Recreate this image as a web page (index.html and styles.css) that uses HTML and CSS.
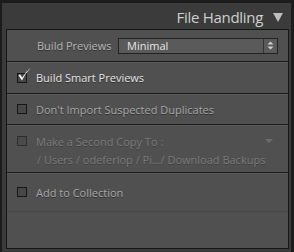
FILE: index.html
```html
<!DOCTYPE html>
<html>
<head>
<meta charset="utf-8">
<link rel="stylesheet" href="styles.css">
</head>
<body>
<div class="frame">
  <div class="header">
    <span class="title">File Handling</span>
    <span class="tri"></span>
  </div>
  <div class="panel">
    <div class="row row-previews">
      <span class="label">Build Previews</span>
      <div class="select">
        <span class="sel-text">Minimal</span>
        <span class="stepper">
          <svg width="7" height="9" viewBox="0 0 7 9"><path d="M3.5 0.5 L6.5 3.5 H0.5 Z M3.5 8.5 L6.5 5.5 H0.5 Z" fill="#cfcfcf"/></svg>
        </span>
      </div>
    </div>
    <div class="row row-check">
      <span class="box checked">
        <svg class="tick" width="15" height="16" viewBox="0 0 15 16"><path d="M1.5 8.5 L5 13.5 Q8.5 6 14 0.5 Q9 4.5 5.2 10.4 L3 7.2 Z" fill="#f2f2f2"/></svg>
      </span>
      <span class="text bright">Build Smart Previews</span>
    </div>
    <div class="row row-check">
      <span class="box"></span>
      <span class="text">Don't Import Suspected Duplicates</span>
    </div>
    <div class="row row-copy">
      <div class="copy-line">
        <span class="box dim"></span>
        <span class="text disabled">Make a Second Copy To :</span>
        <span class="mini-tri"></span>
      </div>
      <div class="path disabled">/ Users / odeferlop / Pi…/ Download Backups</div>
    </div>
    <div class="row row-collection">
      <span class="box"></span>
      <span class="text">Add to Collection</span>
    </div>
    <div class="rest"></div>
  </div>
</div>
</body>
</html>
```

FILE: styles.css
```css
html, body {
  margin: 0;
  padding: 0;
  background: #1c1c1c;
}
body {
  width: 294px;
  height: 252px;
  overflow: hidden;
  font-family: "Open Sans", "Noto Sans", sans-serif;
}
.frame {
  box-sizing: border-box;
  margin-left: 2px;
  margin-top: 3px;
  width: 289px;
  height: 249px;
  background: #3b3b3b;
  padding: 0 0 0 4px;
  display: flex;
  flex-direction: column;
}
.header {
  height: 26px;
  display: flex;
  align-items: center;
  justify-content: flex-end;
  padding-right: 8px;
  gap: 10px;
}
.title {
  color: #cfcfcf;
  font-size: 15px;
  letter-spacing: -0.3px;
  margin-top: 2px;
}
.tri {
  width: 0;
  height: 0;
  border-left: 5px solid transparent;
  border-right: 5px solid transparent;
  border-top: 9px solid #bdbdbd;
  margin-top: 2px;
}
.panel {
  box-sizing: border-box;
  width: 283px;
  height: 220px;
  border: 1px solid #161616;
  background: #505050;
  display: flex;
  flex-direction: column;
}
.row {
  border-bottom: 1px solid #1c1c1c;
  box-shadow: 0 1px 0 #5a5a5a;
  display: flex;
  align-items: center;
}
.row-previews {
  height: 32px;
  box-sizing: border-box;
  padding-left: 30px;
}
.label {
  color: #b9b9b9;
  font-size: 11px;
  text-shadow: 0 1px 0 rgba(0,0,0,0.45);
  width: 81px;
}
.select {
  box-sizing: border-box;
  width: 160px;
  height: 16px;
  border: 1px solid #222;
  background: #5a5a5a;
  display: flex;
  align-items: center;
}
.sel-text {
  flex: 1;
  color: #e6e6e6;
  font-size: 11px;
  padding-left: 8px;
  line-height: 14px;
}
.stepper {
  width: 13px;
  height: 14px;
  border-left: 1px solid #333;
  display: flex;
  align-items: center;
  justify-content: center;
}
.row-check {
  height: 31px;
  box-sizing: border-box;
  padding-left: 10px;
  gap: 9px;
}
.row-check:nth-child(2) { height: 32px; }
.box {
  position: relative;
  box-sizing: border-box;
  width: 10px;
  height: 10px;
  border: 1px solid #161616;
  background: #474747;
  flex: none;
}
.box.dim {
  border-color: #2e2e2e;
  background: #4a4a4a;
}
.tick {
  position: absolute;
  left: -1px;
  top: -7px;
}
.text {
  color: #a8a8a8;
  font-size: 11px;
  text-shadow: 0 1px 0 rgba(0,0,0,0.45);
  white-space: nowrap;
}
.text.bright { color: #e4e4e4; }
.disabled {
  color: #7c7c7c;
  text-shadow: 0 1px 0 rgba(0,0,0,0.25);
  font-size: 11px;
}
.row-copy {
  height: 48px;
  box-sizing: border-box;
  flex-direction: column;
  align-items: stretch;
  padding-top: 9px;
}
.copy-line {
  display: flex;
  align-items: center;
  padding-left: 10px;
  gap: 9px;
  height: 14px;
}
.mini-tri {
  margin-left: auto;
  margin-right: 15px;
  width: 0;
  height: 0;
  border-left: 4px solid transparent;
  border-right: 4px solid transparent;
  border-top: 4px solid #6c6c6c;
}
.path {
  padding-left: 30px;
  margin-top: 4px;
  white-space: nowrap;
}
.row-collection {
  height: 39px;
  box-sizing: border-box;
  padding-left: 10px;
  gap: 9px;
  border-bottom: 1px solid #474747;
  box-shadow: none;
}
.rest {
  flex: 1;
}
```
